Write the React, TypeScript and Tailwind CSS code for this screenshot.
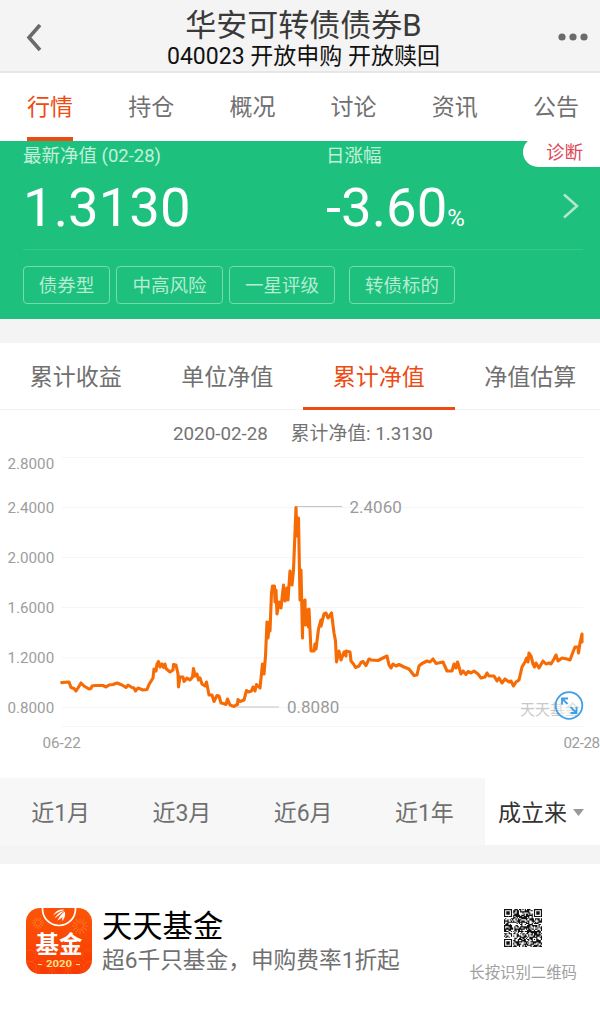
const mainTabs = ["行情", "持仓", "概况", "讨论", "资讯", "公告"];
const chartTabs = ["累计收益", "单位净值", "累计净值", "净值估算"];
const periods = ["近1月", "近3月", "近6月", "近1年"];

const tags = [
  { label: "债券型", className: "w-[87px]" },
  { label: "中高风险", className: "ml-1.5 w-[107px]" },
  { label: "一星评级", className: "ml-1.5 w-[106px]" },
  { label: "转债标的", className: "ml-3.5 w-[106px]" },
];

const axisLabels = [
  { value: "2.8000", line: 457.5, text: 468.5 },
  { value: "2.4000", line: 507.5, text: 512.5 },
  { value: "2.0000", line: 557.5, text: 562.5 },
  { value: "1.6000", line: 607.5, text: 612.5 },
  { value: "1.2000", line: 658, text: 663 },
  { value: "0.8000", line: 707.5, text: 713 },
];

const navPoints =
  "62,682.5 69,682 71,687.5 74,688.5 76,691 78,688 81,683 84,686 89,689 91,688.5 92,686 95,685.5 103,685.5 106,687 109,685 113,684.5 117,683 122,685 126,687.5 128,685 132,687.5 134,688 135.5,691 138,688 143,690 147,689.5 149,684.5 153,678 154,669 156,671 157,664 158.5,661.5 160,667 162,664 163.5,667.5 165,664 166,668.5 170,672 173,670 173.5,664.5 176,665 178,674 178.5,687 180,677 183,677 184,681.5 187,678 190,680 192.5,677 193.5,668.5 195,676 197,674 198.5,680 200,678 202,684 205,686 206.5,682 209,695 212,695 214,701.5 217,695.5 219,696 221,703 223.5,703.5 226,704.5 227.5,699 230,705 234,706.5 236,705 237.5,704.5 238,699.5 240,701.5 244,700 246.5,690.5 248.5,692 251.5,691 253,687 255,691 256.5,684.5 260,688 262.5,664 264,674 265.5,656 267,622 268,638 269.5,622 270,631 271.5,593 272.5,586 274.5,586 275,602 276,590 277,614 279,602 281,608 283.5,585 285,601 287,588 288,600 290,571 292,585 293.5,570 296,507.5 297,536 298.5,518 300,600 301,570 302.5,638 303,602 305,600 305.5,625 307,610 308.5,627 309,609 311,651 314,651 315,644 316,649 318.5,629 321,620 321,626 324,614 326,613 328,618 331.5,613 334,633 335.5,641 336.5,662 339,651 341,660 344,652 346,656 346,651 350,652 351,661 353.5,664 355.5,667.5 359,666 361,662.5 363,661.5 366,665.5 369,659 371,660 378,660.5 387,656 389,665 391,668 393,664 396,666 399,664.5 404,667 409,669 414,675.5 417,675 419,666 422,663.5 427,661 430,662 433,659 436,663.5 443,662 447,671 452,671 454,664 456,668 457.5,662 459,667 461,674 463,671 466,674.5 468,671.5 471,673 474,671 478,674 481,678 485,677 487,673 489,676 494,676 497,681 499,678 502,683 505,679 509,682 511,681 513.5,686 516,682 519,680 522,667 525,662 526.5,658 528,662 529,653 531,656 533,664 534.5,667 536,663 539,668 543,661 546,664 549,663 551,664 554,659 556,655 558,661 562,658 567,659 570,660 573,652 575,647 578,647 578.5,653 580,643 582,634 582,642 581,640";

const QR_SIZE = 33;

// finder patterns sit in three corners, the rest is filled from a small hash
function isDark(x: number, y: number) {
  const corners = [
    [0, 0],
    [QR_SIZE - 7, 0],
    [0, QR_SIZE - 7],
  ];
  for (const [cx, cy] of corners) {
    const d = Math.max(Math.abs(x - cx - 3), Math.abs(y - cy - 3));
    if (d <= 4) return d !== 4 && d !== 2;
  }
  const d = Math.max(Math.abs(x - 26), Math.abs(y - 26));
  if (d <= 2) return d !== 1;
  const n = Math.sin(x * 12.9898 + y * 78.233) * 43758.5453;
  return n - Math.floor(n) > 0.45;
}

function QrCode() {
  let path = "";
  for (let y = 0; y < QR_SIZE; y++) {
    for (let x = 0; x < QR_SIZE; x++) {
      if (isDark(x, y)) path += `M${x} ${y}h1v1h-1z`;
    }
  }
  return (
    <svg width="38" height="38" viewBox="0 0 33 33">
      <path d={path} fill="#111" />
    </svg>
  );
}

function Firework({ x, y, r }: { x: number; y: number; r: number }) {
  return (
    <g transform={`translate(${x} ${y})`} stroke="#ff8a3d" strokeWidth="0.8" opacity="0.75">
      {[0, 30, 60, 90, 120, 150, 180, 210, 240, 270, 300, 330].map((a) => (
        <line key={a} x1={r * 0.35} x2={r} y1="0" y2="0" transform={`rotate(${a})`} />
      ))}
    </g>
  );
}

function AppLogo() {
  return (
    <svg width="66" height="66" viewBox="0 0 66 66" className="shrink-0">
      <defs>
        <clipPath id="logo">
          <rect width="66" height="66" rx="14" />
        </clipPath>
        <linearGradient id="logoBg" x1="0" y1="0" x2="0" y2="1">
          <stop offset="0" stopColor="#fb5606" />
          <stop offset="1" stopColor="#f93a04" />
        </linearGradient>
      </defs>
      <g clipPath="url(#logo)">
        <rect width="66" height="66" fill="url(#logoBg)" />
        <Firework x={12} y={15} r={6} />
        <Firework x={54} y={18} r={8} />
        <g fill="none" stroke="#ff7a30" strokeWidth="0.6" opacity="0.5">
          {[2, 18, 34, 50, 66].map((x) => (
            <g key={x}>
              <circle cx={x} cy="62" r="9" />
              <circle cx={x} cy="62" r="5.5" />
            </g>
          ))}
          <circle cx="4" cy="48" r="6" />
          <circle cx="62" cy="48" r="6" />
        </g>
        <circle cx="33" cy="1" r="16.5" fill="#fb5005" stroke="#fff" strokeWidth="1.7" />
        <path
          d="M27 7.5C30 2.500 34 0.500 38.500 2C33.500 3.200 30.500 5 27 7.500zM28.500 10.200C32 5.300 35 3.300 38.500 3C34.500 5.500 32 8.500 28.500 10.200zM31.500 12.500C33.500 8 36 5 39 3.500C37.500 8 35.500 11 31.500 12.500zM36 13C36 9 37 6 39 4C39.500 8 38.500 11 36 13z"
          fill="#fff"
        />
        <text
          x="33"
          y="45"
          textAnchor="middle"
          fill="#fff"
          fontWeight="700"
          fontSize="23.5"
          className="font-['Noto_Sans_CJK_SC',sans-serif]"
        >
          基金
        </text>
        <text
          x="33"
          y="59"
          textAnchor="middle"
          fill="#ffe08a"
          fontWeight="700"
          fontSize="9"
          textLength="26"
          lengthAdjust="spacingAndGlyphs"
          className="font-[Roboto,sans-serif]"
        >
          2020
        </text>
        <path d="M12 56.500h4M50 56.500h4" stroke="#ffe08a" strokeWidth="1.2" />
      </g>
    </svg>
  );
}

function NavChart() {
  return (
    <svg width="600" height="328" viewBox="0 450 600 328" className="block font-[Roboto,'Noto_Sans_CJK_SC',sans-serif]">
      <g stroke="#f5f5f5">
        {axisLabels.map((a) => (
          <line key={a.value} x1="62" x2="583" y1={a.line} y2={a.line} />
        ))}
        <line x1="62" x2="583" y1="726.5" y2="726.5" />
      </g>
      <g fill="#9d9d9d" fontSize="15.2">
        {axisLabels.map((a) => (
          <text key={a.value} x="7.5" y={a.text}>
            {a.value}
          </text>
        ))}
        <text x="42.5" y="747.5">06-22</text>
        <text x="563.5" y="747.5" textLength="36.5">02-28</text>
      </g>
      <path d="M296 506.500H342M233 707H279" stroke="#c4c4c4" strokeWidth="1.2" />
      <g fill="#9b9b9b" fontSize="17">
        <text x="349.5" y="512.5">2.4060</text>
        <text x="287" y="713">0.8080</text>
      </g>
      <text x="520" y="714.5" fill="#c8c8c8" fontSize="15">天天基金</text>
      <polyline points={navPoints} fill="none" stroke="#f76b05" strokeWidth="3.1" strokeLinejoin="round" strokeLinecap="square" />
      <g fill="none" stroke="#3f9fe5" strokeWidth="1.8">
        <circle cx="569" cy="705.5" r="13.3" fill="#fff" fillOpacity="0.4" />
        <path d="M567.500 704l-5-5M562 704.500v-6h6M570.500 707l5.500 5.500M576.500 707v6h-6" />
      </g>
    </svg>
  );
}

export default function App() {
  return (
    <div className="flex h-[1017px] w-[600px] flex-col overflow-hidden bg-white font-[Roboto,'Noto_Sans_CJK_SC',sans-serif] text-[#707070]">
      <header className="flex h-[73px] shrink-0 items-center justify-between border-b-2 border-[#e6e6e6] bg-[#f4f4f4] pt-0.5 pr-3 pl-[26px]">
        <svg width="30" height="30" viewBox="0 0 30 30" fill="none" stroke="#6b6b6b" strokeWidth="3.6">
          <path d="M14 3L3 15.500L14 28" />
        </svg>
        <div className="flex flex-col items-center pt-1.5 pr-[7px]">
          <h1 className="text-[31px] leading-[35px] text-[#3a3a3a]">华安可转债债券B</h1>
          <p className="text-[23px] leading-7 text-[#111]">040023 开放申购 开放赎回</p>
        </div>
        <svg width="30" height="8" viewBox="0 0 30 8" fill="#6b6b6b">
          <circle cx="4" cy="4" r="3.6" />
          <circle cx="15" cy="4" r="3.6" />
          <circle cx="26" cy="4" r="3.6" />
        </svg>
      </header>

      <nav className="flex h-[68px] shrink-0 justify-between pr-[21px] pl-[27px] text-[23px]">
        {mainTabs.map((tab, i) => (
          <div
            key={tab}
            className={
              i === 0
                ? "flex items-center border-b-4 border-[#ed4b12] pt-1.5 text-[#ed4b12]"
                : "flex items-center border-b-4 border-transparent pt-1.5"
            }
          >
            {tab}
          </div>
        ))}
      </nav>

      <section className="relative flex h-[178px] shrink-0 flex-col overflow-hidden bg-[#1dc17d] px-[23px] text-white">
        <div className="absolute -top-1 right-0 flex h-[30px] w-[77px] items-center rounded-l-full bg-white pt-[3px] pl-[23px] text-[18.5px] text-[#e0495a]">
          诊断
        </div>
        <div className="flex h-[108px] pt-px">
          <div className="w-[303px]">
            <p className="text-[18.5px] leading-7 text-[#c3f0dc]">最新净值 (02-28)</p>
            <p className="text-[54.5px] leading-[74px]">1.3130</p>
          </div>
          <div>
            <p className="text-[18.5px] leading-7 text-[#c3f0dc]">日涨幅</p>
            <p className="text-[54.5px] leading-[74px]">
              -3.60<span className="text-[24px]">%</span>
            </p>
          </div>
          <svg width="18" height="26" viewBox="0 0 18 26" fill="none" stroke="#b4e6d0" strokeWidth="2.5" className="mt-[51px] mr-[-3px] ml-auto">
            <path d="M2 1.500L15 13L2 24.500" />
          </svg>
        </div>
        <div className="h-px w-[560px] bg-[#34c88b]" />
        <div className="mt-4 flex">
          {tags.map((tag) => (
            <span
              key={tag.label}
              className={`flex h-[38px] shrink-0 items-center justify-center rounded-[4px] border border-[#77dab1] pt-[3px] text-[18.5px] text-[#b5ecd4] ${tag.className}`}
            >
              {tag.label}
            </span>
          ))}
        </div>
      </section>

      <div className="h-6 shrink-0 bg-[#f4f4f4]" />

      <nav className="grid h-[67px] w-[606px] shrink-0 grid-cols-4 border-b border-[#f3f3f3] text-[23px]">
        {chartTabs.map((tab, i) => (
          <div
            key={tab}
            className={
              i === 2
                ? "-mb-px flex items-center justify-center border-b-3 border-[#ed4b12] pt-1.5 text-[#ed4b12]"
                : "-mb-px flex items-center justify-center border-b-3 border-transparent pt-1.5"
            }
          >
            {tab}
          </div>
        ))}
      </nav>

      <div className="flex h-10 shrink-0 items-center gap-[23px] pt-[9px] pl-[173px] text-[18.8px] text-[#737373]">
        <span>2020-02-28</span>
        <span>累计净值: 1.3130</span>
      </div>
      <NavChart />

      <div className="flex h-[67px] shrink-0 text-[23px]">
        {periods.map((p) => (
          <div key={p} className="flex w-[121.25px] items-center justify-center bg-[#f7f7f7] pt-[5px]">
            {p}
          </div>
        ))}
        <div className="flex flex-1 items-center pt-[5px] pl-[13px] text-[#333]">
          成立来
          <svg width="11" height="7" viewBox="0 0 11 7" className="mb-1 ml-1.5">
            <path d="M0 0h11L5.500 7z" fill="#999" />
          </svg>
        </div>
      </div>
      <div className="h-[19px] shrink-0 bg-[#f4f4f4]" />

      <footer className="flex h-[153px] shrink-0 items-center pr-[23px] pl-[26px]">
        <AppLogo />
        <div className="ml-2.5 pt-[5px]">
          <p className="text-[30.3px] leading-[35px] text-black">天天基金</p>
          <p className="text-[22.7px] leading-[34px]">超6千只基金，申购费率1折起</p>
        </div>
        <div className="ml-auto flex flex-col items-center pt-[13px]">
          <QrCode />
          <p className="mt-3.5 text-[15.4px] leading-6 text-[#a0a0a0]">长按识别二维码</p>
        </div>
      </footer>
    </div>
  );
}
